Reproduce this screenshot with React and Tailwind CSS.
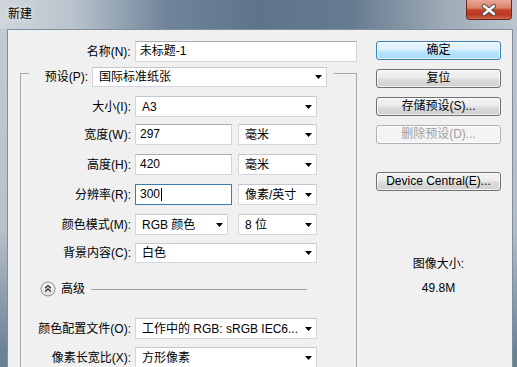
import React from "react";

// 输入框
function Field({ w, value, focused }) {
  return (
    <div
      className={`h-[21px] bg-white border pl-[4px] leading-[19px] flex items-center whitespace-nowrap ${
        focused ? "border-[#3d7bad]" : "border-[#d2d6dc] border-t-[#abadb3]"
      } ${w}`}
    >
      <span>{value}</span>
      {focused && <span className="ml-px w-px h-[13px] bg-black" />}
    </div>
  );
}

// 下拉框
function Combo({ w, value, h = "h-[21px]" }) {
  return (
    <div
      className={`${h} ${w} bg-white border border-[#d2d6dc] border-t-[#c4c7cd] flex items-center pl-[6px] pr-[4px] whitespace-nowrap overflow-hidden`}
    >
      <span className="flex-1 overflow-hidden">{value}</span>
      <svg width="7" height="4" viewBox="0 0 7 4" className="shrink-0 ml-1">
        <path d="M0 0H7L3.5 4Z" fill="#000" />
      </svg>
    </div>
  );
}

function Row({ label, className = "", children }) {
  return (
    <div className={`flex items-center ${className}`}>
      <div className="w-[110px] text-right whitespace-nowrap">{label}</div>
      <div className="ml-[4px] flex items-center">{children}</div>
    </div>
  );
}

function Btn({ children, primary, disabled, className = "" }) {
  let look =
    "border-[#707070] bg-[linear-gradient(180deg,#f4f4f4_0%,#ebebeb_48%,#dddddd_52%,#cfcfcf_100%)] text-black";
  if (primary)
    look =
      "border-[#3c7fb1] bg-[linear-gradient(180deg,#eaf6fd_0%,#d9f0fc_48%,#bee6fd_52%,#a7d9f5_100%)] text-black";
  if (disabled) look = "border-[#adb2b5] bg-[#f4f4f4] text-[#a0a0a0]";
  return (
    <div
      className={`w-[125px] h-[19px] rounded-[3px] border shadow-[inset_0_0_0_1px_rgba(255,255,255,0.7)] text-center leading-[17px] ${look} ${className}`}
    >
      {children}
    </div>
  );
}

export default function App() {
  return (
    <div className="w-[517px] h-[367px] overflow-hidden font-['Liberation_Sans','Noto_Sans_CJK_SC',sans-serif] text-[12px] text-black bg-[linear-gradient(90deg,#cfd6dc_0%,#b9c3cc_14%,#71859a_32%,#5f7489_50%,#677b90_68%,#9eaab6_86%,#bcc5ce_100%)] flex flex-col">
      {/* 标题栏 */}
      <div className="h-[29px] shrink-0 flex items-start justify-between">
        <div className="ml-[8px] mt-[6px] leading-[16px] [text-shadow:0_0_6px_rgba(255,255,255,0.9)]">新建</div>
        <div className="mr-[5px] w-[46px] h-[20px] rounded-b-[4px] border border-t-0 border-[#6b2a1f] bg-[linear-gradient(180deg,#eaa898_0%,#d9826b_42%,#c2432a_52%,#b8391f_78%,#d0664b_100%)] flex items-center justify-center">
          <svg width="16" height="12" viewBox="0 0 16 12">
            <path d="M3 2L13 10M13 2L3 10" stroke="#4a4a4a" strokeWidth="4.2" strokeLinecap="round" />
            <path d="M3 2L13 10M13 2L3 10" stroke="#ffffff" strokeWidth="2.4" strokeLinecap="round" />
          </svg>
        </div>
      </div>

      <div className="flex flex-1">
        {/* 左边框 */}
        <div className="w-[7px] bg-[linear-gradient(180deg,#c2cbd3_0%,#b7c1ca_45%,#6f8398_72%,#4d6379_100%)]" />

        {/* 客户区 */}
        <div className="w-[506px] border border-b-0 border-[#7f8e9c] bg-[#f0f0f0] flex">
          {/* 左侧表单 */}
          <div className="w-[349px]">
            <div className="mt-[11px] flex items-center">
              <div className="w-[123px] text-right">名称(N):</div>
              <Field w="ml-[4px] w-[223px]" value="未标题-1" />
            </div>

            {/* 预设分组 */}
            <div className="mt-[11px] ml-[12px] w-[337px] h-[400px] border border-b-0 border-[#a8a8a8]">
              <div className="-mt-[7px] ml-[8px] w-fit pl-[13px] pr-[7px] bg-[#f0f0f0] flex items-center">
                <div className="w-[50px] pr-[4px] text-right whitespace-nowrap">预设(P):</div>
                <Combo w="w-[235px]" h="h-[20px]" value="国际标准纸张" />
              </div>

              <Row label="大小(I):" className="mt-[9px]">
                <Combo w="w-[182px]" value="A3" />
              </Row>
              <Row label="宽度(W):" className="mt-[7px]">
                <Field w="w-[97px]" value="297" />
                <Combo w="ml-[6px] w-[79px]" value="毫米" />
              </Row>
              <Row label="高度(H):" className="mt-[9px]">
                <Field w="w-[97px]" value="420" />
                <Combo w="ml-[6px] w-[79px]" value="毫米" />
              </Row>
              <Row label="分辨率(R):" className="mt-[9px]">
                <Field w="w-[97px]" value="300" focused />
                <Combo w="ml-[6px] w-[79px]" value="像素/英寸" />
              </Row>
              <Row label="颜色模式(M):" className="mt-[9px]">
                <Combo w="w-[93px]" value="RGB 颜色" />
                <Combo w="ml-[10px] w-[79px]" value="8 位" />
              </Row>
              <Row label="背景内容(C):" className="mt-[8px]">
                <Combo w="w-[182px]" h="h-[20px]" value="白色" />
              </Row>

              {/* 高级 */}
              <div className="mt-[18px] ml-[19px] h-[16px] flex items-center">
                <svg width="16" height="16" viewBox="0 0 16 16">
                  <defs>
                    <linearGradient id="adv" x1="0" y1="0" x2="0" y2="1">
                      <stop offset="0" stopColor="#ffffff" />
                      <stop offset="1" stopColor="#dcdcdc" />
                    </linearGradient>
                  </defs>
                  <circle cx="8" cy="8" r="7" fill="url(#adv)" stroke="#8c8c8c" />
                  <path d="M5.2 7.2L8 4.6L10.8 7.2M5.2 10.4L8 7.8L10.8 10.4" fill="none" stroke="#222" strokeWidth="1.3" />
                </svg>
                <span className="ml-[5px] leading-[16px]">高级</span>
                <div className="ml-[6px] w-[216px] h-px bg-[#a0a0a0] mt-px" />
              </div>

              <Row label="颜色配置文件(O):" className="mt-[21px]">
                <Combo w="w-[182px]" value="工作中的 RGB: sRGB IEC6..." />
              </Row>
              <Row label="像素长宽比(X):" className="mt-[8px]">
                <Combo w="w-[182px]" value="方形像素" />
              </Row>
            </div>
          </div>

          {/* 右侧按钮 */}
          <div className="ml-[19px] mt-[11px] flex flex-col">
            <Btn primary>确定</Btn>
            <Btn className="mt-[9px]">复位</Btn>
            <Btn className="mt-[9px]">存储预设(S)...</Btn>
            <Btn className="mt-[9px]" disabled>删除预设(D)...</Btn>
            <Btn className="mt-[28px]">Device Central(E)...</Btn>
            <div className="w-[125px] text-center leading-[16px] mt-[65px]">图像大小:</div>
            <div className="w-[125px] text-center leading-[16px] mt-[8px]">49.8M</div>
          </div>
        </div>

        {/* 右边框 */}
        <div className="w-[4px] bg-[linear-gradient(180deg,#bcc5ce_0%,#b3bdc7_45%,#6f8398_72%,#4d6379_100%)]" />
      </div>
    </div>
  );
}
